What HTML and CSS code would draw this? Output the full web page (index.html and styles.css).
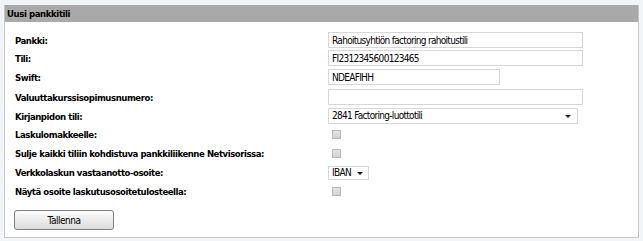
FILE: index.html
```html
<!DOCTYPE html>
<html>
<head>
	<title>Uusi pankkitili</title>
	<link rel="stylesheet" href="styles.css">
</head>
<body>

<div class="panel">
  <div class="panel-header">Uusi pankkitili</div>
  <form class="panel-body">
    <div class="form-grid">
      <label>Pankki:</label>
      <div><input type="text" class="field" value="Rahoitusyhtiön factoring rahoitustili"></div>

      <label>Tili:</label>
      <div><input type="text" class="field" value="FI2312345600123465"></div>

      <label>Swift:</label>
      <div><input type="text" class="field short" value="NDEAFIHH"></div>

      <label>Valuuttakurssisopimusnumero:</label>
      <div><input type="text" class="field" value=""></div>

      <label>Kirjanpidon tili:</label>
      <div><span class="select wide">2841 Factoring-luottotili</span></div>

      <label>Laskulomakkeelle:</label>
      <div><input type="checkbox" class="check"></div>

      <label>Sulje kaikki tiliin kohdistuva pankkiliikenne Netvisorissa:</label>
      <div><input type="checkbox" class="check"></div>

      <label>Verkkolaskun vastaanotto-osoite:</label>
      <div><span class="select small">IBAN</span></div>

      <label>Näytä osoite laskutusosoitetulosteella:</label>
      <div><input type="checkbox" class="check"></div>
    </div>

    <button type="button" class="button">Tallenna</button>
  </form>
</div>

</body>
</html>
```

FILE: styles.css
```css
body {
    margin: 0;
    background: #f2f5f8;
    font-family: "DejaVu Sans Condensed", "DejaVu Sans", sans-serif;
    font-size: 10px;
    letter-spacing: -0.7px;
    color: #000;
}

.panel {
    margin: 5px 4px 0 4px;
    background: #fff;
    border: 1px solid #c8c8c8;
    border-top: 0;
}

.panel-header {
    height: 17px;
    line-height: 17px;
    padding-left: 2px;
    background: #a9a9a9;
    font-size: 9.5px;
    font-weight: bold;
    letter-spacing: -0.4px;
}

.panel-body {
    padding: 9px 0 7px 10px;
}

.form-grid {
    display: grid;
    grid-template-columns: 313px 1fr;
    grid-template-rows: 18px 18px 20px 20px 18px 19px 19px 19px 19px;
    align-items: center;
}

.form-grid label {
    font-size: 9.5px;
    font-weight: bold;
    letter-spacing: -0.45px;
    white-space: nowrap;
}

.form-grid > div {
    display: flex;
    align-items: center;
}

.field {
    box-sizing: border-box;
    width: 255px;
    height: 16px;
    margin: 0;
    padding: 0 3px;
    border: 1px solid #d6d6d6;
    font: inherit;
    letter-spacing: inherit;
    color: #000;
    outline: none;
}

.field.short {
    width: 172px;
}

.select {
    box-sizing: border-box;
    position: relative;
    display: block;
    height: 16px;
    line-height: 14px;
    padding: 0 3px;
    border: 1px solid #d6d6d6;
    background: #fff;
}

.select:after {
    content: "";
    position: absolute;
    right: 6px;
    top: 6px;
    border-left: 3px solid transparent;
    border-right: 3px solid transparent;
    border-top: 3px solid #111;
}

.select.wide {
    width: 250px;
}

.select.small {
    width: 41px;
    height: 14px;
    line-height: 12px;
}

.select.small:after {
    top: 5px;
    right: 5px;
}

.check {
    -webkit-appearance: none;
    appearance: none;
    width: 9px;
    height: 9px;
    margin: 0 0 0 4px;
    border: 1px solid #b9b9b9;
    background: linear-gradient(#e4e4e4, #d2d2d2);
}

.button {
    display: block;
    width: 100px;
    height: 20px;
    margin: 9px 0 0 -1px;
    padding: 0;
    border: 1px solid #808080;
    border-radius: 3px;
    background: linear-gradient(#fbfbfb, #dcdcdc);
    font: inherit;
    letter-spacing: -0.5px;
    color: #000;
}
```
